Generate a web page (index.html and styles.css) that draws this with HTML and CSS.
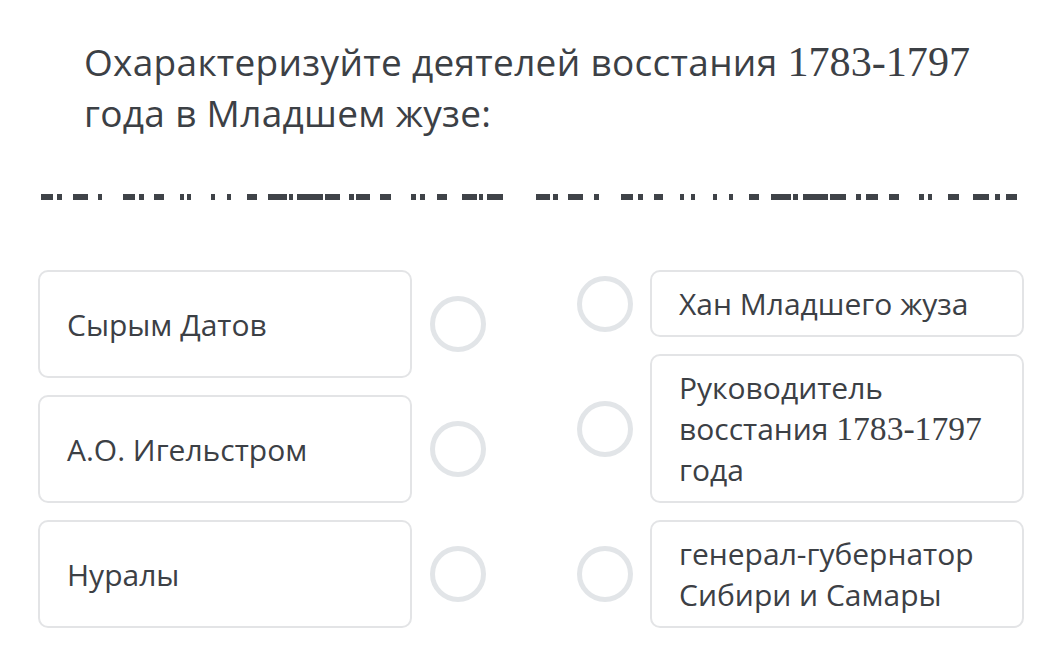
FILE: index.html
```html
<!DOCTYPE html>
<html lang="ru">
<head>
<meta charset="utf-8">
<title>Сопоставление</title>
<link rel="stylesheet" href="styles.css">
</head>
<body>
<div class="page">
  <h1 class="question">Охарактеризуйте деятелей восстания <span class="num">1783-1797</span> года в Младшем жузе:</h1>

  <svg class="dashes" viewBox="0 0 1052 6" width="1052" height="6" aria-hidden="true">
    <g fill="#3f4348">
      <rect x="41" width="12" height="6"/><rect x="57" width="5" height="6"/><rect x="73" width="15" height="6"/><rect x="98" width="4" height="6"/>
      <rect x="123" width="12" height="6"/><rect x="139" width="5" height="6"/><rect x="154" width="10" height="6"/><rect x="180" width="4" height="6"/>
      <rect x="187" width="4" height="6"/><rect x="211" width="4" height="6"/><rect x="227" width="4" height="6"/><rect x="247" width="10" height="6"/>
      <rect x="268" width="19" height="6"/><rect x="289" width="4" height="6"/><rect x="297" width="26" height="6"/><rect x="325" width="15" height="6"/>
      <rect x="349" width="5" height="6"/><rect x="356" width="14" height="6"/><rect x="380" width="11" height="6"/><rect x="411" width="5" height="6"/>
      <rect x="420" width="5" height="6"/><rect x="437" width="10" height="6"/><rect x="462" width="15" height="6"/><rect x="479" width="4" height="6"/>
      <rect x="487" width="16" height="6"/>
      <rect x="536" width="14" height="6"/><rect x="553" width="5" height="6"/><rect x="568" width="15" height="6"/><rect x="594" width="5" height="6"/>
      <rect x="621" width="12" height="6"/><rect x="638" width="5" height="6"/><rect x="654" width="9" height="6"/><rect x="680" width="4" height="6"/>
      <rect x="691" width="4" height="6"/><rect x="713" width="4" height="6"/><rect x="729" width="4" height="6"/><rect x="749" width="10" height="6"/>
      <rect x="771" width="20" height="6"/><rect x="793" width="5" height="6"/><rect x="803" width="25" height="6"/><rect x="830" width="16" height="6"/>
      <rect x="856" width="5" height="6"/><rect x="866" width="12" height="6"/><rect x="889" width="10" height="6"/><rect x="919" width="5" height="6"/>
      <rect x="928" width="4" height="6"/><rect x="948" width="11" height="6"/><rect x="973" width="16" height="6"/><rect x="995" width="5" height="6"/>
      <rect x="1006" width="11" height="6"/>
    </g>
  </svg>

  <div class="match">
    <div class="side side-left">
      <div class="item">
        <div class="card">Сырым Датов</div>
        <span class="dot"></span>
      </div>
      <div class="item">
        <div class="card">А.О. Игельстром</div>
        <span class="dot"></span>
      </div>
      <div class="item">
        <div class="card">Нуралы</div>
        <span class="dot"></span>
      </div>
    </div>
    <div class="side side-right">
      <div class="item">
        <span class="dot"></span>
        <div class="card">Хан Младшего жуза</div>
      </div>
      <div class="item">
        <span class="dot"></span>
        <div class="card">Руководитель восстания <span class="num">1783-1797</span> года</div>
      </div>
      <div class="item">
        <span class="dot"></span>
        <div class="card">генерал-губернатор Сибири и Самары</div>
      </div>
    </div>
  </div>
</div>
</body>
</html>
```

FILE: styles.css
```css
html, body {
  margin: 0;
  padding: 0;
  background: #ffffff;
}

body {
  font-family: "Open Sans", "Noto Sans", sans-serif;
  color: #3c4045;
}

.page {
  width: 1052px;
  height: 670px;
  overflow: hidden;
}

.question {
  margin: 36px 68px 0 84px;
  font-size: 37px;
  font-weight: 400;
  letter-spacing: 0.3px;
  line-height: 51px;
  color: #3c4045;
}

.num {
  font-family: "Liberation Serif", "DejaVu Serif", serif;
  font-size: 1.14em;
  letter-spacing: 0;
  line-height: 1;
}

.card .num {
  font-size: 1.12em;
}

.dashes {
  display: block;
  margin-top: 56px;
}

.match {
  display: flex;
  gap: 91px;
  margin: 70px 0 0 38px;
  width: 986px;
}

.side {
  display: flex;
  flex-direction: column;
  gap: 17px;
}

.side-left .item {
  flex: 1 1 0;
}

.item {
  display: flex;
  align-items: center;
  gap: 18px;
}

.side-right .item {
  gap: 17px;
}

.card {
  box-sizing: border-box;
  width: 374px;
  align-self: stretch;
  display: flex;
  align-items: center;
  border: 2px solid #e3e4e6;
  border-radius: 10px;
  padding: 11px 27px;
  font-size: 30px;
  line-height: 41px;
  color: #3c4045;
}

.side-right .card {
  display: block;
}

.dot {
  flex: none;
  box-sizing: border-box;
  width: 56px;
  height: 56px;
  border: 5px solid #e2e5e8;
  border-radius: 50%;
}
```
